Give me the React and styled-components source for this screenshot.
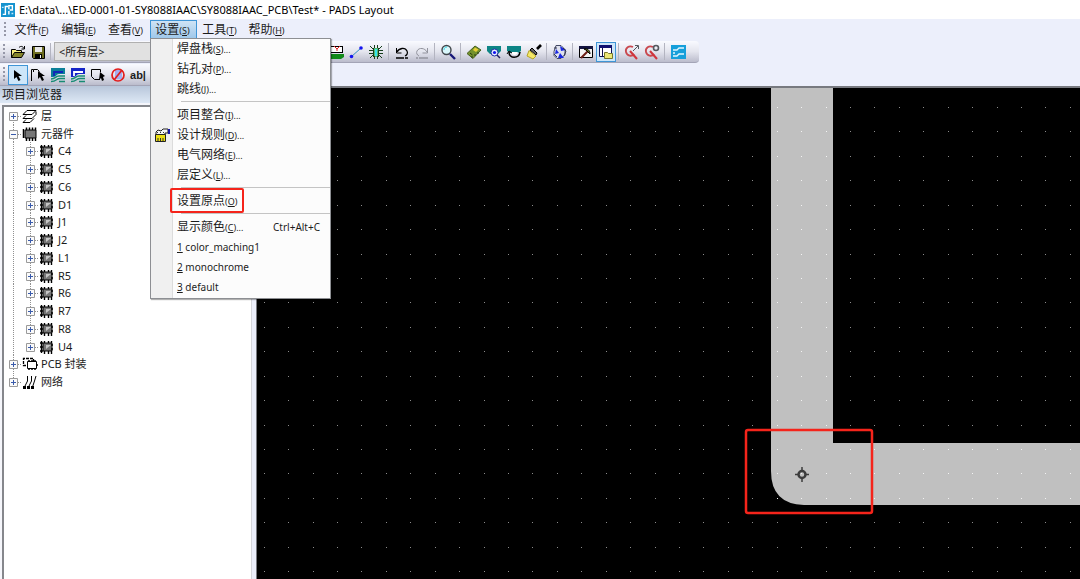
import React from 'react';
import styled, { createGlobalStyle, ThemeProvider } from 'styled-components';

const theme = {
  colors: {
    chrome: '#eceffb',
    line: '#8f9096',
    text: '#1c1c1c',
    active: '#cde6f9',
    activeBorder: '#3f95d6',
    mark: '#f5241b',
    copper: '#c0c0c0',
  },
  font: '"Noto Sans", "Noto Sans CJK SC", sans-serif',
};

const GlobalStyle = createGlobalStyle`
  * {
    box-sizing: border-box;
  }
  body {
    margin: 0;
    overflow: hidden;
  }
  button, select {
    font: inherit;
    color: inherit;
    margin: 0;
    padding: 0;
    border: 0;
    background: none;
  }
`;

const Window = styled.div`
  display: flex;
  flex-direction: column;
  height: 100vh;
  font-family: ${({ theme }) => theme.font};
  font-size: 11px;
  color: ${({ theme }) => theme.colors.text};
  background: ${({ theme }) => theme.colors.chrome};
`;

const TitleBar = styled.header`
  display: flex;
  align-items: center;
  gap: 4px;
  height: 19px;
  padding-left: 1px;
  background: #fff;
  white-space: nowrap;
`;

const Title = styled.h1`
  margin: 0;
  font: 400 11px/18px 'Noto Sans', sans-serif;
  color: #000;
`;

const MenuBar = styled.nav`
  display: flex;
  align-items: center;
  height: 21px;
  padding-left: 1px;
`;

const MenuGroup = styled.div`
  position: relative;
`;

const MenuButton = styled.button`
  display: block;
  width: 47px;
  height: 19px;
  padding-right: 2px;
  line-height: 17px;
  white-space: nowrap;
  border: 1px solid ${({ theme, $open }) => ($open ? theme.colors.activeBorder : 'transparent')};
  background: ${({ $open }) => ($open ? 'linear-gradient(#cfe3f5, #9fc8ea)' : 'none')};
  font-size: 12px;
`;

const Key = styled.span`
  font-size: 9px;
`;

const Menu = styled.div`
  position: absolute;
  z-index: 2;
  top: 18px;
  left: 0;
  width: 181px;
  padding: 0 0 1px;
  border: 1px solid #8d8f93;
  box-shadow: 1px 1px 1px rgba(0, 0, 0, 0.3);
  background: linear-gradient(90deg, #f0f0f0 21px, #dcdcdc 21px, #dcdcdc 22px, #fcfcfc 22px);
`;

const MenuItem = styled.button`
  display: flex;
  align-items: center;
  width: 100%;
  height: 20px;
  line-height: 18px;
  white-space: nowrap;
  font-size: ${({ $latin }) => ($latin ? '10px' : '12px')};
`;

const MenuIcon = styled.span`
  display: flex;
  justify-content: center;
  width: 21px;
  margin-right: 5px;
`;

const Shortcut = styled.span`
  margin-left: auto;
  padding-right: 10px;
  font-size: 10px;
`;

const Marked = styled.span`
  position: relative;
  &::after {
    content: '';
    position: absolute;
    inset: -4px -7px -2px;
    border: 2px solid ${({ theme }) => theme.colors.mark};
    border-radius: 2px;
  }
`;

const MenuLine = styled.hr`
  height: 1px;
  margin: 2px 0 3px 30px;
  border: 0;
  background: #c4c4c4;
`;

const Toolbar = styled.div`
  display: flex;
  align-items: center;
  align-self: flex-start;
  height: 22px;
  margin-top: 1px;
  padding-right: 11px;
  border-radius: 0 4px 4px 0;
  border-bottom: 1px solid #a3a4b6;
  background: linear-gradient(#f9faff, #e4e5ee 50%, #bbbccc);
`;

const Grip = styled.span`
  width: 3px;
  height: 15px;
  margin: 0 2px 0 3px;
  background: repeating-linear-gradient(#9698a8 0 2px, transparent 2px 4px);
  background-size: 2px 100%;
  background-repeat: no-repeat;
`;

const ToolButton = styled.button`
  display: flex;
  flex: none;
  align-items: center;
  justify-content: center;
  width: 20px;
  height: 20px;
  border: 1px solid ${({ theme, $on }) => ($on ? theme.colors.activeBorder : 'transparent')};
  background: ${({ theme, $on }) => ($on ? theme.colors.active : 'none')};
`;

const Divider = styled.span`
  flex: none;
  width: 1px;
  height: 17px;
  margin: 0 3px 0 2px;
  background: #b3b4c0;
`;

const LayerSelect = styled.select`
  width: 272px;
  height: 19px;
  padding-left: 4px;
  appearance: none;
  border: 1px solid #b0b0b0;
  background: #e1e1e1;
`;

const Main = styled.main`
  display: flex;
  flex: 1;
  min-height: 0;
`;

const Sidebar = styled.aside`
  display: flex;
  flex-direction: column;
  width: 252px;
  background: #f5f6fb;
`;

const PanelTitle = styled.h2`
  margin: 0;
  padding-left: 2px;
  font-size: 12px;
  font-weight: 400;
  line-height: 17px;
  background: linear-gradient(#b8c6da, #dde8f5);
`;

const TreeBox = styled.div`
  flex: 1;
  margin: 2px 0 0 2px;
  border: solid #85878c;
  border-width: 2px 0 0 2px;
  border-right: 1px solid #d5d6dc;
  background: #fff;
`;

const Tree = styled.ul`
  display: grid;
  grid-auto-rows: 1fr;
  height: 284px;
  margin: 0;
  padding: 0 0 0 1px;
  list-style: none;
`;

const TreeRow = styled.li`
  display: flex;
  align-items: center;
  min-height: 0;
  line-height: 16px;
`;

const TreeLabel = styled.span`
  margin-left: 3px;
`;

const Board = styled.section`
  flex: 1;
  min-width: 0;
  margin: 0 0 0 4px;
  border: solid #77797f;
  border-width: 2px 0 0 1px;
  background: #000;
`;

const Drawing = styled.svg`
  display: block;
  width: 100%;
  height: 100%;
`;

const Icon = ({ size = 16, children }) => (
  <svg width={size} height={size} viewBox="0 0 16 16" fill="none" stroke="#000" aria-hidden="true">
    {children}
  </svg>
);

const AppIcon = () => (
  <Icon size={14}>
    <path d="M0 0h16v16H0z" fill="#1593cf" stroke="none" />
    <path d="M2 13h3V4h3" stroke="#fff" strokeWidth="1.600" />
    <path d="M9 13V9M9 7V3h4v5h-3" stroke="#fff" strokeWidth="1.600" />
    <path d="M1 5h2M12 12h2" stroke="#bfe8fb" strokeWidth="1.600" />
  </Icon>
);

const OpenIcon = () => (
  <Icon>
    <path d="M1.500 13.500v-8h4l1 1h5v2" fill="#f5ed7c" />
    <path d="M1.500 13.500l3-5h10l-3 5z" fill="#85852a" />
    <path d="M9 3.500c2-2 4-1 5 1M14.500 2v3h-3" />
  </Icon>
);

const SaveIcon = () => (
  <Icon>
    <path d="M2.500 2.500h12v12h-11l-1-1z" fill="#6d6d20" />
    <path d="M5 3h7v5H5z" fill="#e8e8e8" stroke="none" />
    <path d="M5 10h7v4H5z" fill="#000" stroke="none" />
    <path d="M10 11h1v3h-1z" fill="#fff" stroke="none" />
  </Icon>
);

const BoardCutIcon = () => (
  <Icon>
    <path d="M1 2.500h14M14.500 2v7M1 8.500h14" />
    <path d="M2 3h12v5H2z" fill="#fff" stroke="none" />
    <path d="M6 2l3 3 3-3M9 5v2" stroke="#e02020" />
    <path d="M0 10h16v3l-3 2H0z" fill="#118a18" stroke="none" />
  </Icon>
);

const TraceIcon = () => (
  <Icon>
    <path d="M3 13L13 4" stroke="#2f8fc0" />
    <circle cx="3.500" cy="12.500" r="1.800" fill="#1414f0" stroke="none" />
    <circle cx="13" cy="4" r="1.800" fill="#1414f0" stroke="none" />
  </Icon>
);

const RatsIcon = () => (
  <Icon>
    <path d="M5 4h6v9H5z" fill="#58b870" stroke="none" />
    <path d="M7 5h2v7H7z" fill="#35e4ee" stroke="none" />
    <path
      d="M6.500 1v3M9.500 1v3M6.500 12v3M9.500 12v3M1 6.500h4M11 6.500h4M1 9.500h4M11 9.500h4M2 2l3 3M14 2l-3 3M2 14l3-3M14 14l-3-3M5.500 4v9M10.500 4v9"
      stroke="#173e1c"
    />
  </Icon>
);

const UndoIcon = () => (
  <Icon>
    <path d="M2.500 4v5h5" />
    <path d="M3 8c2-4 8-5 10-1 1 2 0 4-2 5" strokeWidth="1.300" />
    <path d="M2 14h8M11 14h3" strokeWidth="1.500" />
  </Icon>
);

const RedoIcon = () => (
  <Icon>
    <path d="M13.500 4v5h-5M13 8C11 4 5 3 3 7c-1 2 0 4 2 5" stroke="#93949e" />
    <path d="M2 14h2M5 14h9" stroke="#93949e" strokeWidth="1.500" />
  </Icon>
);

const ZoomIcon = () => (
  <Icon>
    <circle cx="6.500" cy="6" r="4.500" fill="#d9f7fb" stroke="#40454a" strokeWidth="1.400" />
    <path d="M4 6c0-2 1-3 3-3" stroke="#33cfe0" />
    <path d="M10 10l5 5" stroke="#181878" strokeWidth="2.400" />
  </Icon>
);

const BoardIcon = () => (
  <Icon>
    <path d="M1 9.500L9 2l6 4-8 8.500z" fill="#74922c" stroke="#48601c" />
    <path d="M9 3.500l3.500 2L10 8 7 6z" fill="#e8cf38" stroke="none" />
    <path d="M4 9l2.500 2M6 12v2M9 10v2M12 8v2" stroke="#253a10" />
  </Icon>
);

const ViewPadIcon = () => (
  <Icon>
    <path d="M1 2h14v5l-3 3H4L1 7z" fill="#0d8585" stroke="none" />
    <circle cx="8.500" cy="8.500" r="3.500" fill="#e8f0ff" stroke="#2030a8" />
    <circle cx="8.500" cy="8.500" r="1.600" fill="#1414f0" stroke="none" />
    <path d="M11 11l3 3" stroke="#202060" strokeWidth="1.500" />
  </Icon>
);

const CopperIcon = () => (
  <Icon>
    <path d="M1 2h14v5l-3 2H4L1 7z" fill="#0d8585" stroke="none" />
    <path d="M5 8h7c-1 4-6 4-7 0z" fill="#fff" stroke="none" />
    <path d="M3 8c0 7 10 7 11 0" strokeWidth="1.600" />
    <path d="M1 10l2-3 3 2" />
  </Icon>
);

const BrushIcon = () => (
  <Icon>
    <path d="M15 1l-4 4" strokeWidth="2.600" />
    <path d="M6 4l5 5-1 2-6-5z" fill="#666" />
    <path d="M3 6.500l7 5.500-3 3-6-3z" fill="#f4e868" stroke="#b5a428" />
  </Icon>
);

const CycleIcon = () => (
  <Icon>
    <path d="M4 1.500h5l4 4v5l-4 4H5l-3-3v-4z" fill="#dfe2ef" stroke="#444a66" />
    <path d="M8 2l1 5 5-1zM4 5l3 4-4 1zM8 9l4 5H6z" fill="#1a28e0" stroke="none" />
    <path d="M2 4h3M11 4l3 3-2 5M5 13l-3-3" stroke="#30344c" />
  </Icon>
);

const HammerIcon = () => (
  <Icon>
    <path d="M1.500 2.500h13v11h-13z" fill="#f4f4f4" />
    <path d="M1 2h14v3H1z" fill="#151540" stroke="none" />
    <path d="M3 14l7-7" stroke="#6b1c14" strokeWidth="2" />
    <path d="M6 5c3-1 6 1 6 5l-2-2-2-2z" fill="#6a741e" />
  </Icon>
);

const ExplorerIcon = () => (
  <Icon>
    <path d="M1.500 1.500h12v11h-12z" fill="#fff" stroke="#101050" />
    <path d="M1 1h13v3H1z" fill="#101070" stroke="none" />
    <path d="M4.500 4v9" stroke="#101050" />
    <path d="M6.500 14.500v-6h3l1 1h4v5z" fill="#ece774" stroke="#77772a" />
  </Icon>
);

const RedZoomIcon = ({ children }) => (
  <Icon>
    <path d="M9 3C5 1 1 4 2 8s6 5 8 2" stroke="#c9484e" strokeWidth="1.800" />
    <path d="M6 7l7 8" stroke="#d0353c" strokeWidth="2" />
    {children}
  </Icon>
);

const RouterIcon = () => (
  <Icon>
    <path d="M1 1h15v14H1z" fill="#169fda" stroke="none" />
    <path d="M3 6h4l2-2h5M3 12h4l2-2h5M3 9h2" stroke="#e2f7ff" strokeWidth="1.300" />
  </Icon>
);

const PointerIcon = () => (
  <Icon>
    <path d="M4 3v9l2.500-2 2 4 2-1-2-4H12z" fill="#000" stroke="none" />
  </Icon>
);

const SelectTraceIcon = () => (
  <Icon>
    <path d="M1.500 14V2.500h2V5M3.500 2.500h4l2 2" />
    <path d="M8 4v8l2-2 2 4 2-1-2-4h3z" fill="#000" stroke="none" />
  </Icon>
);

const PourIcon = ({ open }) => (
  <Icon>
    <path d="M1 1h14v6H9c-3 0-2 3-6 3H1z" fill={open ? '#1424c8' : '#0b7f99'} stroke="none" />
    <path d="M4 9V5h9" stroke={open ? '#fff' : '#1226b8'} strokeWidth="1.800" />
    <path d="M1 12c5 0 4-3 8-3h6M1 14.500c6 0 5-3 9-3h5M9 14.500h6" stroke="#178c74" strokeWidth="1.400" />
  </Icon>
);

const OutlineIcon = () => (
  <Icon>
    <path d="M10 12.500H4.500l-3-3v-7h9V5" />
    <path d="M10 5l5 4-2 1 1 3-2 1-1-3-2 2z" fill="#000" stroke="none" />
  </Icon>
);

const KeepoutIcon = () => (
  <Icon>
    <path d="M5 3h7v9H5z" fill="#a4aef0" stroke="none" />
    <circle cx="8" cy="8" r="6" stroke="#e31c1c" strokeWidth="1.700" />
    <path d="M12 3L4 13" stroke="#e31c1c" strokeWidth="1.700" />
  </Icon>
);

const TextIcon = styled.span`
  font: 700 11px/16px 'Liberation Sans', sans-serif;
`;

const RulesIcon = () => (
  <Icon>
    <path d="M2 5l2-2 3 1 2-2h5v4h-3v2H2z" fill="#f4f4f4" stroke="#222" />
    <path d="M1.500 7.500h10v7h-10z" fill="#ecdf14" stroke="#222" />
    <path d="M14 2h2v5h-2z" fill="#1515a8" stroke="none" />
    <path d="M4 11v3M6.500 11v3M9 11v3" stroke="#333" />
    <path d="M3 5.500h1M6 5.500h1M9 5.500h1" stroke="#333" />
  </Icon>
);

const LayersIcon = () => (
  <Icon>
    <path d="M1 6.500L5 2.500h9L10 6.500zM1 10.500l3-3M1 10.500h9l4-4M1 14.500l3-3M1 14.500h7l4-4M14 6.500v-3" />
  </Icon>
);

const ChipIcon = () => (
  <Icon>
    <path d="M3 4h11v8H3z" fill="#777" />
    <path
      d="M4.500 1.500V4M7.500 1.500V4M10.500 1.500V4M13.500 1.500V4M4.500 12v3M7.500 12v3M10.500 12v3M13.500 12v3"
      strokeWidth="1.500"
    />
    <path d="M1.500 3v9" strokeWidth="1.500" />
  </Icon>
);

const PartIcon = () => (
  <Icon>
    <path d="M4 4h9v8H4z" fill="#777" />
    <path d="M7 6h5l-5 4z" fill="#c6c6c6" stroke="none" />
    <path
      d="M2.500 2v12M5.500 2v2M9.500 2v2M12.500 2v2M5.500 12v3M9.500 12v3M12.500 12v3M1 4h3M1 8h3M1 12h3M12 6h2M12 10h2"
      strokeWidth="1.400"
    />
  </Icon>
);

const DecalIcon = () => (
  <Icon>
    <path d="M4 9.500H1.500v-7h10V5" strokeDasharray="3 1" strokeWidth="1.300" />
    <path d="M5.500 5.500h9v7h-9z" fill="#fff" />
    <path d="M7 4v2M10 4v2M13 4v2M7 12v2M10 12v2M13 12v2M14 9h2" strokeWidth="1.500" />
  </Icon>
);

const NetIcon = () => (
  <Icon>
    <path d="M5.500 2v5l-3 6M9.500 2v5l-3 6M14 2l-1.500 5-2 6" />
    <path d="M1 12h3v3H1zM5 12h3v3H5zM9 12h3v3H9z" fill="#000" stroke="none" />
  </Icon>
);

// one 17px column of the tree: dotted guide lines, with the +/- box on top
const Guide = ({ box, open, first, last }) => (
  <svg width="17" height="18" viewBox="0 0 17 18" fill="none" aria-hidden="true">
    <path d={`M8.500 ${first ? 9 : 0}V${last ? 9 : 18}`} stroke="#909090" strokeDasharray="1 1" />
    {box && (
      <>
        <path d="M9 9.500h8" stroke="#909090" strokeDasharray="1 1" />
        <path d="M4.500 5.500h8v8h-8z" fill="#fafafa" stroke="#9a9a9a" />
        <path d={open ? 'M6 9.500h5' : 'M6 9.500h5M8.500 7v5'} stroke="#3a5bab" />
      </>
    )}
  </svg>
);

const parts = ['C4', 'C5', 'C6', 'D1', 'J1', 'J2', 'L1', 'R5', 'R6', 'R7', 'R8', 'U4'];

const menus = [
  ['文件', 'F'],
  ['编辑', 'E'],
  ['查看', 'V'],
  ['设置', 'S'],
  ['工具', 'T'],
  ['帮助', 'H'],
];

const setupItems = [
  { label: '焊盘栈', hotkey: 'S', more: true },
  { label: '钻孔对', hotkey: 'P', more: true },
  { label: '跳线', hotkey: 'J', more: true },
  null,
  { label: '项目整合', hotkey: 'I', more: true },
  { label: '设计规则', hotkey: 'D', more: true, icon: <RulesIcon /> },
  { label: '电气网络', hotkey: 'E', more: true },
  { label: '层定义', hotkey: 'L', more: true },
  null,
  { label: '设置原点', hotkey: 'O', marked: true },
  null,
  { label: '显示颜色', hotkey: 'C', more: true, shortcut: 'Ctrl+Alt+C' },
  { label: 'color_maching1', number: 1 },
  { label: 'monochrome', number: 2 },
  { label: 'default', number: 3 },
];

const standardTools = [
  ['Board outline', <BoardCutIcon />],
  ['Route', <TraceIcon />],
  ['Ratsnest', <RatsIcon />],
  null,
  ['Undo', <UndoIcon />],
  ['Redo', <RedoIcon />],
  null,
  ['Zoom', <ZoomIcon />],
  null,
  ['Board', <BoardIcon />],
  ['View pad', <ViewPadIcon />],
  ['Copper', <CopperIcon />],
  ['Redraw', <BrushIcon />],
  null,
  ['Cycle', <CycleIcon />],
  null,
  ['Output window', <HammerIcon />],
  ['Project explorer', <ExplorerIcon />, true],
  null,
  ['Zoom to selection', <RedZoomIcon><path d="M9 7l5-5M11 1.500h3.500V5" stroke="#55585e" /></RedZoomIcon>],
  ['Zoom settings', <RedZoomIcon><circle cx="12" cy="4" r="2.500" stroke="#55585e" strokeWidth="1.600" /></RedZoomIcon>],
  null,
  ['Router', <RouterIcon />],
];

const drawTools = [
  ['Select', <PointerIcon />, true],
  ['Select trace', <SelectTraceIcon />],
  ['Copper pour', <PourIcon />],
  ['Copper pour cutout', <PourIcon open />],
  ['Outline', <OutlineIcon />],
  ['Keepout', <KeepoutIcon />],
  ['Text', <TextIcon>ab|</TextIcon>],
  ['Dimension', <CycleIcon />],
];

const Hotkey = ({ letter }) => (
  <Key>
    (<u>{letter}</u>)
  </Key>
);

const Tools = ({ items }) =>
  items.map((item, i) =>
    item ? (
      <ToolButton key={i} aria-label={item[0]} $on={item[2]}>
        {item[1]}
      </ToolButton>
    ) : (
      <Divider key={i} />
    )
  );

const SetupMenu = () => (
  <Menu>
    {setupItems.map((item, i) => {
      if (!item) return <MenuLine key={i} />;
      const Label = item.marked ? Marked : 'span';
      return (
        <MenuItem key={i} $latin={item.number}>
          <MenuIcon>{item.icon}</MenuIcon>
          <Label>
            {item.number && <><u>{item.number}</u> </>}
            {item.label}
            {item.hotkey && <Hotkey letter={item.hotkey} />}
            {item.more && <Key>...</Key>}
          </Label>
          {item.shortcut && <Shortcut>{item.shortcut}</Shortcut>}
        </MenuItem>
      );
    })}
  </Menu>
);

const ProjectTree = () => (
  <Tree>
    <TreeRow>
      <Guide box first />
      <LayersIcon />
      <TreeLabel>层</TreeLabel>
    </TreeRow>
    <TreeRow>
      <Guide box open />
      <ChipIcon />
      <TreeLabel>元器件</TreeLabel>
    </TreeRow>
    {parts.map((part) => (
      <TreeRow key={part}>
        <Guide />
        <Guide box last={part === 'U4'} />
        <PartIcon />
        <TreeLabel>{part}</TreeLabel>
      </TreeRow>
    ))}
    <TreeRow>
      <Guide box />
      <DecalIcon />
      <TreeLabel>PCB 封装</TreeLabel>
    </TreeRow>
    <TreeRow>
      <Guide box last />
      <NetIcon />
      <TreeLabel>网络</TreeLabel>
    </TreeRow>
  </Tree>
);

// grid points, 24.43px apart
const dots = [];
for (let row = 0; row < 20; row++) {
  for (let col = -3; col < 31; col++) {
    dots.push([Math.round(80 + col * 24.43), Math.round(19 + row * 24.43)]);
  }
}

const onCopper = ([x, y]) => (x > 514 && x < 576 && y < 417) || (x > 514 && y > 354 && y < 417);

const BoardDrawing = () => (
  <Drawing role="img" aria-label="PCB">
    <path d="M514 0h62v355h2000v62H547q-33-1-33-34z" fill={theme.colors.copper} />
    {dots.map(([x, y]) => (
      <rect key={`${x}-${y}`} x={x} y={y} width="1" height="1" fill={onCopper([x, y]) ? '#f4f4f4' : '#8c8c8c'} />
    ))}
    <circle cx="545" cy="386.500" r="3.500" fill="none" stroke="#3c3c3c" strokeWidth="2.500" />
    <path d="M545 379v5M545 389v5M538 386.500h4M548 386.500h4" stroke="#3c3c3c" strokeWidth="1.500" />
    <rect x="489" y="342" width="126" height="83" rx="2" fill="none" stroke={theme.colors.mark} strokeWidth="2.500" />
  </Drawing>
);

const App = () => {
  return (
    <ThemeProvider theme={theme}>
      <GlobalStyle />
      <Window>
        <TitleBar>
          <AppIcon />
          <Title>E:\data\...\ED-0001-01-SY8088IAAC\SY8088IAAC_PCB\Test* - PADS Layout</Title>
        </TitleBar>
        <MenuBar>
          <Grip />
          {menus.map(([label, letter]) => (
            <MenuGroup key={letter}>
              <MenuButton $open={letter === 'S'}>
                {label}
                <Hotkey letter={letter} />
              </MenuButton>
              {letter === 'S' && <SetupMenu />}
            </MenuGroup>
          ))}
        </MenuBar>
        <Toolbar>
          <Grip />
          <ToolButton aria-label="Open"><OpenIcon /></ToolButton>
          <ToolButton aria-label="Save"><SaveIcon /></ToolButton>
          <Divider />
          <LayerSelect aria-label="层">
            <option>&lt;所有层&gt;</option>
          </LayerSelect>
          <Tools items={standardTools} />
        </Toolbar>
        <Toolbar>
          <Grip />
          <Tools items={drawTools} />
        </Toolbar>
        <Main>
          <Sidebar>
            <PanelTitle>项目浏览器</PanelTitle>
            <TreeBox>
              <ProjectTree />
            </TreeBox>
          </Sidebar>
          <Board>
            <BoardDrawing />
          </Board>
        </Main>
      </Window>
    </ThemeProvider>
  );
};

export default App;
